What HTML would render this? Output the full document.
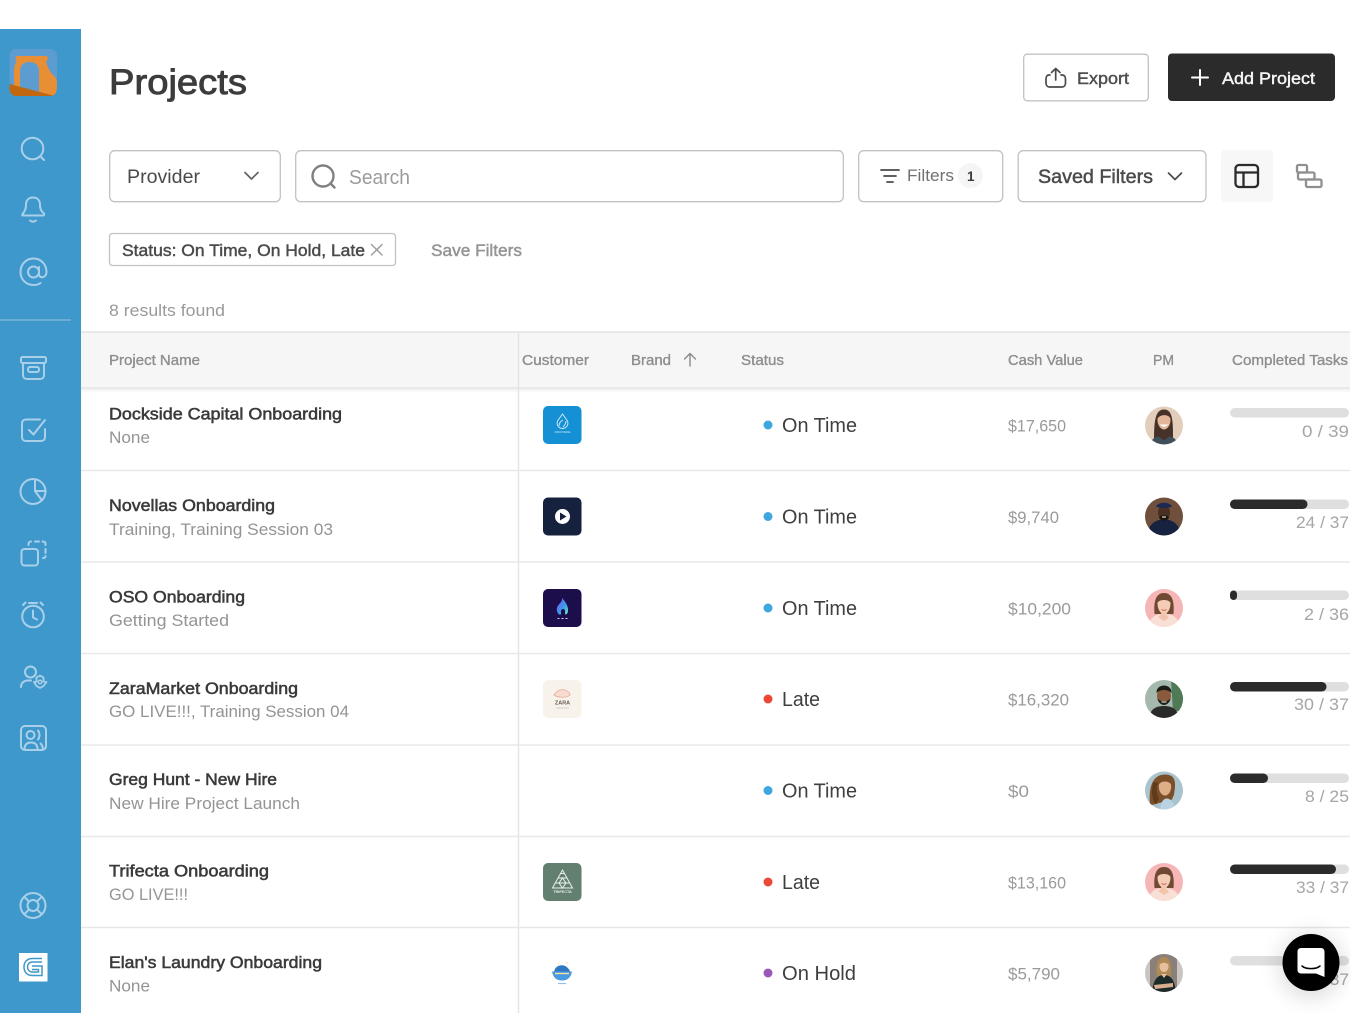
<!DOCTYPE html>
<html lang="en"><head><meta charset="utf-8"><title>Projects</title>
<style>
html,body{margin:0;padding:0;background:#fff;width:1350px;height:1013px;overflow:hidden}
svg{display:block;filter:blur(.25px)}
text{font-family:"Liberation Sans",sans-serif;white-space:pre}
.m{stroke:currentColor;stroke-width:.45}
.name{font-size:17px;fill:#3a3a3a;color:#3a3a3a;stroke:currentColor;stroke-width:.55}
.sub{font-size:17px;fill:#949494}
.st{font-size:20px;fill:#3f3f3f}
.cash{font-size:17px;fill:#9a9a9a}
.cnt{font-size:17px;fill:#a6a6a6}
.th{font-size:14.5px;fill:#8e8e8e;color:#8e8e8e;stroke:currentColor;stroke-width:.35}
.ic{fill:none;stroke:#a9d0e8;stroke-width:2;stroke-linecap:round;stroke-linejoin:round}
.sep{stroke:#e8e8e8;stroke-width:1.6}
.box{fill:#fff;stroke:#c2c2c2;stroke-width:1.3}
</style></head><body>
<svg width="1350" height="1013" viewBox="0 0 1350 1013" xmlns="http://www.w3.org/2000/svg">
<defs>
<clipPath id="av"><circle cx="0" cy="0" r="19"/></clipPath>
<clipPath id="lg"><rect x="9.5" y="49" width="47.500" height="47" rx="7"/></clipPath>
<linearGradient id="fl" x1="0" y1="0" x2="1" y2="1"><stop offset="0" stop-color="#7b4cf0"/><stop offset=".6" stop-color="#3a9fe8"/><stop offset="1" stop-color="#6fe8c8"/></linearGradient>
<filter id="sh" x="-60%" y="-60%" width="220%" height="220%"><feGaussianBlur stdDeviation="12"/></filter>
<filter id="sb" x="-10%" y="-10%" width="120%" height="120%"><feGaussianBlur stdDeviation=".35"/></filter>
<linearGradient id="hs" x1="0" y1="0" x2="0" y2="1"><stop offset="0" stop-color="#000" stop-opacity=".07"/><stop offset="1" stop-color="#000" stop-opacity="0"/></linearGradient>
<g id="pink"><g clip-path="url(#av)"><rect x="-19" y="-19" width="38" height="38" fill="#f6b6b6"/><path d="M-9.500 6C-10.500-6-8.500-15 0-15S10.500-6 9.500 6Z" fill="#6f4a31"/><path d="M-6.500-5C-5-9 5-9 6.500-5C6.500 2 3 6 0 6S-6.500 2-6.500-5Z" fill="#f5cdb6"/><path d="M-2.500 1.500C-1 2.500 1 2.500 2.500 1.500" stroke="#c9665f" stroke-width="1" fill="none"/><path d="M-16 20C-15 9-8 6 0 6S15 9 16 20Z" fill="#f9e0d6"/><path d="M-3 5L0 13L3 5Z" fill="#f5cdb6"/><path d="M-6 9L0 4L5 10L0 13Z" fill="#f3c4ac"/></g></g>
</defs>

<!-- main header tinted rows -->
<rect x="81" y="332" width="1269" height="56" fill="#f6f6f6"/>
<line x1="81" y1="332" x2="1350" y2="332" stroke="#e4e4e4" stroke-width="1.500"/>
<rect x="81" y="388" width="1269" height="5" fill="url(#hs)"/>
<line x1="81" y1="388" x2="1350" y2="388" stroke="#e2e2e2" stroke-width="1.200"/>
<line x1="518.500" y1="332" x2="518.500" y2="1013" stroke="#e3e3e3" stroke-width="1.400"/>
<line class="sep" x1="81" y1="470.500" x2="1350" y2="470.500"/>
<line class="sep" x1="81" y1="562" x2="1350" y2="562"/>
<line class="sep" x1="81" y1="653.500" x2="1350" y2="653.500"/>
<line class="sep" x1="81" y1="745" x2="1350" y2="745"/>
<line class="sep" x1="81" y1="836.500" x2="1350" y2="836.500"/>
<line class="sep" x1="81" y1="927.500" x2="1350" y2="927.500"/>

<!-- sidebar -->
<rect x="0" y="29" width="81" height="984" fill="#3f98cb"/>
<g clip-path="url(#lg)">
<rect x="9.500" y="49" width="47.500" height="47" fill="#5c9cd0"/>
<path d="M17 56H46C48 56 48.500 59 47 60.500L46 62C48 68 50 72 53 75C56 77 57 80 57 84C57 90 56 96 52 96H14V72C14 67 15 63 17 62C15 61 15 56 17 56Z" fill="#e88f36"/>
<path d="M20 90V71C20 65 24 62 29.500 62S39 65 39 71V92Z" fill="#5c9cd0"/>
<path d="M9.500 84L55 96H9.500Z" fill="#c0670f"/>
</g>
<g class="ic">
<circle cx="32.500" cy="148.500" r="10.800"/><path d="M40.500 156.500L44 160"/>
<path d="M23 213.500C25 211 26 209 26 205C26 200 29 197.500 33 197.500S40 200 40 205C40 209 41 211 44 213.500C44.500 214.500 44 215.500 43 215.500H23C22 215.500 22 214.500 23 213.500Z"/><path d="M30 220.500C32 222 34 222 36 220.500"/>
<circle cx="33.500" cy="272" r="5.500"/><path d="M39 267V274C39 279 46.500 278 46.500 272C46.500 264.500 41 258.500 33.500 258.500C26 258.500 20.500 264.500 20.500 272C20.500 279.500 26 285 33.500 285C36 285 38.500 284.500 40.500 283"/>
<rect x="21" y="357" width="25" height="6" rx="1.500"/><path d="M23 363V375C23 377.500 24.500 379 27 379H40C42.500 379 44 377.500 44 375V363"/><rect x="28" y="367" width="11" height="5" rx="2"/>
<path d="M40 419.500H26C23.500 419.500 22 421 22 423.500V437C22 439.500 23.500 441 26 441H41C43.500 441 45 439.500 45 437V429"/><path d="M29 430L33.500 434.500L45 420"/>
<circle cx="33" cy="491.500" r="12.500"/><path d="M35 479.500V491H45.500M35 491L42 500.500"/>
<rect x="21.500" y="549" width="16.500" height="16.500" rx="3"/><path d="M28.500 545V544C28.500 542.500 29.500 541.500 31 541.500M35 541.500H39M42.500 541.500C44.500 541.500 45.500 542.500 45.500 544V545M45.500 549V553M45.500 556C45.500 557.500 44.500 558 43 558"/>
<circle cx="33" cy="616.500" r="10.800"/><path d="M33 610.500V617.500L37 619.500M29 603H37M23 605L25.500 602.500M43 605L40.500 602.500"/>
<circle cx="30.500" cy="672" r="5.500"/><path d="M21 687C21 683 24 680.500 28 680.500H31"/><path d="M40 675.500L43.500 677.500V681.500L46.500 682L43.500 686L40 688L36.500 686L34 682L36.500 681.500V677.500Z" stroke-width="1.800"/><circle cx="40" cy="682" r="1.800" stroke-width="1.500"/>
<rect x="21" y="726" width="25" height="24" rx="4"/><circle cx="30.500" cy="735" r="4"/><path d="M24.500 749.500C24.500 744.500 27 742.500 31 742.500S37.500 744.500 37.500 749.500M38 730.500C40 733 40 737 38 739.500M40.500 743.500C42 744.500 42.500 746.500 43 749"/>
<circle cx="33" cy="905.500" r="12.500"/><circle cx="33" cy="905.500" r="5.500"/><path d="M24.500 897L29 901.500M41.500 897L37 901.500M24.500 914L29 909.500M41.500 914L37 909.500"/>
</g>
<line x1="0" y1="320" x2="71" y2="320" stroke="#85bbdb" stroke-width="1.300"/>
<rect x="19" y="953" width="28.500" height="28.500" fill="#fff"/>
<g fill="none" stroke="#3f98cb" stroke-width="1.500"><path d="M42 958.500H32.500C27 958.500 24 962 24 967C24 972 27 975.500 32.500 975.500H42V966H32"/><path d="M42 962H32.500C29 962 27.500 964.500 27.500 967C27.500 969.500 29 972 32.500 972H38.500V969.500H32"/></g>

<!-- title & top buttons -->
<text x="109" y="94" font-size="35" textLength="138" lengthAdjust="spacingAndGlyphs" fill="#3c3c3c" style="color:#3c3c3c;stroke:currentColor;stroke-width:.9">Projects</text>
<rect class="box" x="1023.700" y="54.200" width="124.600" height="46.600" rx="3.500"/>
<g fill="none" stroke="#4a4a4a" stroke-width="1.700" stroke-linecap="round" stroke-linejoin="round"><path d="M1050 75H1049C1047 75 1046 77 1046 79V83C1046 85.500 1047.500 87 1049.500 87H1062C1064 87 1065.500 85.500 1065.500 83V79C1065.500 77 1064.500 75 1062 75H1061"/><path d="M1055.700 80V69M1051.500 72.500L1055.700 68.500L1060 72.500"/></g>
<text x="1077" y="84" font-size="17" textLength="52" lengthAdjust="spacingAndGlyphs" fill="#4e4e4e" class="m" style="color:#4e4e4e">Export</text>
<rect x="1168" y="53.500" width="167" height="47.500" rx="4" fill="#2b2b2b"/>
<path d="M1200 70V85M1192 77.500H1208" stroke="#fff" stroke-width="2" stroke-linecap="round"/>
<text x="1222" y="84" font-size="17" textLength="93" lengthAdjust="spacingAndGlyphs" fill="#f5f5f5" class="m" style="color:#f5f5f5">Add Project</text>

<!-- filter row -->
<rect class="box" x="109.700" y="150.700" width="170.600" height="51" rx="5"/>
<text x="127" y="183" font-size="19" textLength="73" lengthAdjust="spacingAndGlyphs" fill="#4a4a4a">Provider</text>
<path d="M245 172.500L251.500 179L258 172.500" fill="none" stroke="#5e5e5e" stroke-width="1.600" stroke-linecap="round" stroke-linejoin="round"/>
<rect class="box" x="295.700" y="150.700" width="547.600" height="51" rx="5"/>
<circle cx="323" cy="176" r="10.500" fill="none" stroke="#808080" stroke-width="2.400"/><path d="M331 184L334.500 187.500" stroke="#808080" stroke-width="2.400" stroke-linecap="round"/>
<text x="349" y="184" font-size="20" textLength="61" lengthAdjust="spacingAndGlyphs" fill="#9b9b9b">Search</text>
<rect class="box" x="858.700" y="150.700" width="144" height="51" rx="5"/>
<path d="M881 170H899M884 176H896M887 182H893" stroke="#4a4a4a" stroke-width="1.800" stroke-linecap="round"/>
<text x="907" y="181" font-size="16.500" textLength="47" lengthAdjust="spacingAndGlyphs" fill="#707070">Filters</text>
<circle cx="970.500" cy="175.500" r="12.500" fill="#f5f5f5"/>
<text x="967" y="181" font-size="13.500" font-weight="700" fill="#3a3a3a">1</text>
<rect class="box" x="1018.200" y="150.700" width="187.800" height="51" rx="5"/>
<text x="1038" y="183" font-size="19" textLength="115" lengthAdjust="spacingAndGlyphs" fill="#4a4a4a" class="m" style="color:#4a4a4a">Saved Filters</text>
<path d="M1168.500 173L1175 179.500L1181.500 173" fill="none" stroke="#4a4a4a" stroke-width="1.700" stroke-linecap="round" stroke-linejoin="round"/>
<rect x="1221" y="150" width="52" height="52" rx="4" fill="#f7f7f7"/>
<g fill="none" stroke="#2b2b2b" stroke-width="2.300"><rect x="1235.500" y="165" width="22.500" height="22" rx="3.500"/><path d="M1235.500 172.500H1258M1243.500 172.500V187"/></g>
<g fill="none" stroke="#8f8f8f" stroke-width="2.300" stroke-linejoin="round"><rect x="1297" y="165" width="10" height="7.500" rx="1.500"/><rect x="1298" y="172.500" width="16.500" height="7" rx="1.500"/><rect x="1306" y="179.500" width="15.500" height="7.500" rx="1.500"/></g>

<!-- chip row -->
<rect class="box" x="109.500" y="233.500" width="286" height="32" rx="3"/>
<text x="122" y="256" font-size="17" textLength="243" lengthAdjust="spacingAndGlyphs" fill="#4a4a4a" class="m" style="color:#4a4a4a">Status: On Time, On Hold, Late</text>
<path d="M371.500 244.500L382 255M382 244.500L371.500 255" stroke="#9a9a9a" stroke-width="1.400" stroke-linecap="round"/>
<text x="431" y="256" font-size="17" textLength="91" lengthAdjust="spacingAndGlyphs" fill="#949494" class="m" style="color:#949494">Save Filters</text>
<text x="109" y="316" font-size="17" textLength="116" lengthAdjust="spacingAndGlyphs" fill="#9a9a9a">8 results found</text>

<!-- table header -->
<text class="th" x="109" y="365" textLength="91" lengthAdjust="spacingAndGlyphs">Project Name</text>
<text class="th" x="522" y="365" textLength="67" lengthAdjust="spacingAndGlyphs">Customer</text>
<text class="th" x="631" y="365" textLength="40" lengthAdjust="spacingAndGlyphs">Brand</text>
<path d="M690 366V354M684.500 359L690 353.500L695.500 359" fill="none" stroke="#8a8a8a" stroke-width="1.400" stroke-linecap="round" stroke-linejoin="round"/>
<text class="th" x="741" y="365" textLength="43" lengthAdjust="spacingAndGlyphs">Status</text>
<text class="th" x="1008" y="365" textLength="75" lengthAdjust="spacingAndGlyphs">Cash Value</text>
<text class="th" x="1153" y="365" textLength="21" lengthAdjust="spacingAndGlyphs">PM</text>
<text class="th" x="1232" y="365" textLength="116" lengthAdjust="spacingAndGlyphs">Completed Tasks</text>

<!-- project names -->
<text class="name" x="109" y="419.500" textLength="233" lengthAdjust="spacingAndGlyphs">Dockside Capital Onboarding</text>
<text class="sub" x="109" y="443" textLength="41" lengthAdjust="spacingAndGlyphs">None</text>
<text class="name" x="109" y="511" textLength="166" lengthAdjust="spacingAndGlyphs">Novellas Onboarding</text>
<text class="sub" x="109" y="535" textLength="224" lengthAdjust="spacingAndGlyphs">Training, Training Session 03</text>
<text class="name" x="109" y="602.500" textLength="136" lengthAdjust="spacingAndGlyphs">OSO Onboarding</text>
<text class="sub" x="109" y="626" textLength="120" lengthAdjust="spacingAndGlyphs">Getting Started</text>
<text class="name" x="109" y="694" textLength="189" lengthAdjust="spacingAndGlyphs">ZaraMarket Onboarding</text>
<text class="sub" x="109" y="717" textLength="240" lengthAdjust="spacingAndGlyphs">GO LIVE!!!, Training Session 04</text>
<text class="name" x="109" y="785" textLength="168" lengthAdjust="spacingAndGlyphs">Greg Hunt - New Hire</text>
<text class="sub" x="109" y="809" textLength="191" lengthAdjust="spacingAndGlyphs">New Hire Project Launch</text>
<text class="name" x="109" y="876.500" textLength="160" lengthAdjust="spacingAndGlyphs">Trifecta Onboarding</text>
<text class="sub" x="109" y="900" textLength="79" lengthAdjust="spacingAndGlyphs">GO LIVE!!!</text>
<text class="name" x="109" y="968" textLength="213" lengthAdjust="spacingAndGlyphs">Elan's Laundry Onboarding</text>
<text class="sub" x="109" y="991.500" textLength="41" lengthAdjust="spacingAndGlyphs">None</text>

<!-- brand logos -->
<g filter="url(#sb)">
<rect x="543" y="406" width="38.500" height="38" rx="5" fill="#1590d5"/>
<g fill="none" stroke="#d6eefa" stroke-width=".9"><path d="M562.500 414L567.500 421C569 425 566 428.500 562.500 428.500S556 425 557.500 421Z"/><path d="M559 426C559 423 561 421 563 420M563 427C565 425 566 423 566 421"/></g>
<text x="562.500" y="433" font-size="3" fill="#d6eefa" text-anchor="middle">DOCKSIDE</text>
<rect x="543" y="497.500" width="38.500" height="38" rx="5" fill="#15223c"/>
<circle cx="562.500" cy="516.500" r="7.500" fill="#fff"/><path d="M560 512.500L566.500 516.500L560 520.500Z" fill="#15223c"/>
<rect x="543" y="589" width="38.500" height="38" rx="5" fill="#1d0b4c"/>
<path d="M562 598C565 601 568.500 606 568 611C567.800 613 567 614.500 565 614.500V610.500C564.500 608.500 562 608.500 561 610.500V614.500H559C556.500 612 556 608.500 558 605.500C560 603 562.500 601.500 562 598Z" fill="url(#fl)"/>
<path d="M557.500 618.500h2M561.500 618.500h2M565.500 618.500h2" stroke="#cfd8f0" stroke-width="1.100"/>
<rect x="543" y="680" width="38.500" height="38" rx="5" fill="#f7f2ea"/>
<path d="M554 695C557 690 562 689 565 690C568 691 570 693 570 695C567 698 558 698 554 695Z" fill="#f7dcd0" stroke="#e8a99a" stroke-width=".8"/>
<text x="562.500" y="704.500" font-size="5.500" font-weight="700" fill="#6b5d55" text-anchor="middle">ZARA</text>
<path d="M556 708H569" stroke="#c9bfb5" stroke-width=".7"/>
<rect x="543" y="863" width="38.500" height="38" rx="5" fill="#647f6f"/>
<path d="M562.500 870L572.500 888H552.500Z M555.500 883H569.500M558.300 878H566.700M560.500 873.500H564.500M559 883L562.500 888L566 883L562.500 878Z" fill="none" stroke="#eaf0ec" stroke-width="1"/>
<text x="562.500" y="893" font-size="3.800" font-weight="700" fill="#eaf0ec" text-anchor="middle">TRIFECTA</text>
<rect x="543" y="954" width="38.500" height="38" rx="6" fill="#fff"/>
<path d="M552 971.500H572C571 977 568 980.500 562 980.500S553 977 552 971.500Z" fill="#4a9ae0"/>
<path d="M555 969C557 965.500 562 964 566 966.500C568 968 569.500 969.500 570 971.500H554Z" fill="#2f78c4"/>
<path d="M555 973.500H569" stroke="#f4e3a0" stroke-width="1.400"/>
<path d="M558 983.500H566" stroke="#8fc1ec" stroke-width="1.200"/>
<path d="M558 964h1M566 963h1.500" stroke="#f2d44e" stroke-width="1"/>
</g>

<!-- status -->
<circle cx="768" cy="425" r="4.500" fill="#3fa7dd"/><text class="st" x="782" y="432" textLength="75" lengthAdjust="spacingAndGlyphs">On Time</text>
<circle cx="768" cy="516.500" r="4.500" fill="#3fa7dd"/><text class="st" x="782" y="523.500" textLength="75" lengthAdjust="spacingAndGlyphs">On Time</text>
<circle cx="768" cy="608" r="4.500" fill="#3fa7dd"/><text class="st" x="782" y="615" textLength="75" lengthAdjust="spacingAndGlyphs">On Time</text>
<circle cx="768" cy="699" r="4.500" fill="#ea4a35"/><text class="st" x="782" y="706" textLength="38" lengthAdjust="spacingAndGlyphs">Late</text>
<circle cx="768" cy="790.500" r="4.500" fill="#3fa7dd"/><text class="st" x="782" y="797.500" textLength="75" lengthAdjust="spacingAndGlyphs">On Time</text>
<circle cx="768" cy="882" r="4.500" fill="#ea4a35"/><text class="st" x="782" y="889" textLength="38" lengthAdjust="spacingAndGlyphs">Late</text>
<circle cx="768" cy="973" r="4.500" fill="#9b59b6"/><text class="st" x="782" y="980" textLength="74" lengthAdjust="spacingAndGlyphs">On Hold</text>

<!-- cash -->
<text class="cash" x="1008" y="431.500" textLength="58" lengthAdjust="spacingAndGlyphs">$17,650</text>
<text class="cash" x="1008" y="523" textLength="51" lengthAdjust="spacingAndGlyphs">$9,740</text>
<text class="cash" x="1008" y="614.500" textLength="63" lengthAdjust="spacingAndGlyphs">$10,200</text>
<text class="cash" x="1008" y="705.500" textLength="61" lengthAdjust="spacingAndGlyphs">$16,320</text>
<text class="cash" x="1008" y="797" textLength="21" lengthAdjust="spacingAndGlyphs">$0</text>
<text class="cash" x="1008" y="888.500" textLength="58" lengthAdjust="spacingAndGlyphs">$13,160</text>
<text class="cash" x="1008" y="979.500" textLength="52" lengthAdjust="spacingAndGlyphs">$5,790</text>

<!-- avatars -->
<g filter="url(#sb)">
<g transform="translate(1164,425.500)"><g clip-path="url(#av)"><rect x="-19" y="-19" width="38" height="38" fill="#e3cdbb"/><path d="M-10 16C-10-4-9-16 0-16S9-4 9 14Z" fill="#46302a"/><path d="M-6.500-7C-4-11 4-12 6.500-7C7 0 3 4 0 4S-7 0-6.500-7Z" fill="#e4b598"/><path d="M-4-1C-2 2 2 2 4-1Z" fill="#fff"/><path d="M-14 20C-13 13-8 11-5 11L0 15L5 11C8 11 13 13 14 20Z" fill="#3f4f5c"/></g></g>
<g transform="translate(1164,516.500)"><g clip-path="url(#av)"><rect x="-19" y="-19" width="38" height="38" fill="#70503c"/><path d="M-17 20C-16 7-8 3 0 3S16 7 17 20Z" fill="#12203f"/><ellipse cx="0" cy="-4" rx="6" ry="7.500" fill="#4a2f22"/><path d="M-8-10C-6-15 6-15 8-10C4-8-4-8-8-10Z" fill="#1c2a52"/><path d="M-5 1C-3 5 3 5 5 1L3-1H-3Z" fill="#1a120e"/><path d="M-2 .5H2" stroke="#fff" stroke-width="1"/></g></g>
<use href="#pink" x="1164" y="608"/>
<g transform="translate(1164,699)"><g clip-path="url(#av)"><rect x="-19" y="-19" width="38" height="38" fill="#a5b8ae"/><path d="M7-19H19V12H9Z" fill="#4f7a55"/><path d="M-15 20C-14 9-7 7 0 7S14 9 15 20Z" fill="#2a2a2a"/><ellipse cx="0" cy="-3" rx="7" ry="8.500" fill="#8a5a3c"/><path d="M-7.500-6C-8-16 8-16 7.500-6C4-10-4-10-7.500-6Z" fill="#1f1a15"/><path d="M-6.500 0C-4 8 4 8 6.500 0L3 2H-3Z" fill="#1f1a15"/><path d="M-2.500 3H2.500" stroke="#fff" stroke-width="1"/></g></g>
<g transform="translate(1164,790.500)"><g clip-path="url(#av)"><rect x="-19" y="-19" width="38" height="38" fill="#a9c4cc"/><path d="M-14 15C-16-6-10-16 1-16S12-8 10 4L8 9Z" fill="#7b4f2a"/><path d="M-5-6C-3-10 5-10 7-6C8 1 4 5 1 5S-6 1-5-6Z" fill="#dcaf88"/><path d="M-4 20C-3 10 0 8 3 8S10 12 12 20Z" fill="#bad2e4"/><path d="M-11-8C-13 2-12 10-8 14L-5 8C-8 2-8-4-6-8Z" fill="#5e3a1e"/></g></g>
<use href="#pink" x="1164" y="882"/>
<g transform="translate(1164,973)"><g clip-path="url(#av)"><rect x="-19" y="-19" width="38" height="38" fill="#c9c5c2"/><rect x="-14" y="-19" width="27" height="38" fill="#8b8079"/><path d="M-7 4C-9-8-6-16 0-16S8-8 6.500 4Z" fill="#b08a55"/><path d="M-4.500-8C-3-11 3-11 4.500-8C5-3 2-1 0-1S-5-3-4.500-8Z" fill="#e6bfa0"/><path d="M-12 20C-11 6-6 2 0 2S11 6 12 20Z" fill="#1c2a2c"/><path d="M-3 1L0 5L3 1Z" fill="#e6bfa0"/><path d="M-10 12L9 10V14L-9 16Z" fill="#d9ae90"/></g></g>
</g>

<!-- progress -->
<g fill="#dfdfdf">
<rect x="1230" y="408" width="119" height="9.500" rx="4.750"/>
<rect x="1230" y="499.500" width="119" height="9.500" rx="4.750"/>
<rect x="1230" y="590.500" width="119" height="9.500" rx="4.750"/>
<rect x="1230" y="682" width="119" height="9.500" rx="4.750"/>
<rect x="1230" y="773.500" width="119" height="9.500" rx="4.750"/>
<rect x="1230" y="864.500" width="119" height="9.500" rx="4.750"/>
<rect x="1230" y="956" width="119" height="9.500" rx="4.750"/>
</g>
<g fill="#2b2b2b">
<rect x="1230" y="499.500" width="77.500" height="9.500" rx="4.750"/>
<rect x="1230" y="590.500" width="7" height="9.500" rx="3.500"/>
<rect x="1230" y="682" width="96.500" height="9.500" rx="4.750"/>
<rect x="1230" y="773.500" width="38" height="9.500" rx="4.750"/>
<rect x="1230" y="864.500" width="106" height="9.500" rx="4.750"/>
</g>
<text class="cnt" x="1302" y="437" textLength="47" lengthAdjust="spacingAndGlyphs">0 / 39</text>
<text class="cnt" x="1296" y="528" textLength="53" lengthAdjust="spacingAndGlyphs">24 / 37</text>
<text class="cnt" x="1304" y="620" textLength="45" lengthAdjust="spacingAndGlyphs">2 / 36</text>
<text class="cnt" x="1294" y="710" textLength="55" lengthAdjust="spacingAndGlyphs">30 / 37</text>
<text class="cnt" x="1305" y="802" textLength="44" lengthAdjust="spacingAndGlyphs">8 / 25</text>
<text class="cnt" x="1296" y="893" textLength="53" lengthAdjust="spacingAndGlyphs">33 / 37</text>
<text class="cnt" x="1296" y="985" textLength="53" lengthAdjust="spacingAndGlyphs">33 / 37</text>

<!-- chat bubble -->
<circle cx="1311" cy="966" r="30" fill="#000" opacity=".16" filter="url(#sh)"/>
<circle cx="1311" cy="962.500" r="28.500" fill="#000"/>
<path d="M1301 948H1321C1323 948 1324.500 949.500 1324.500 951.500V977L1316 973.500H1301C1299 973.500 1297.500 972 1297.500 970V951.500C1297.500 949.500 1299 948 1301 948Z" fill="#fff"/>
<path d="M1302 966C1306 969.500 1316 969.500 1320 966" fill="none" stroke="#000" stroke-width="1.500" stroke-linecap="round"/>
</svg>
</body></html>
